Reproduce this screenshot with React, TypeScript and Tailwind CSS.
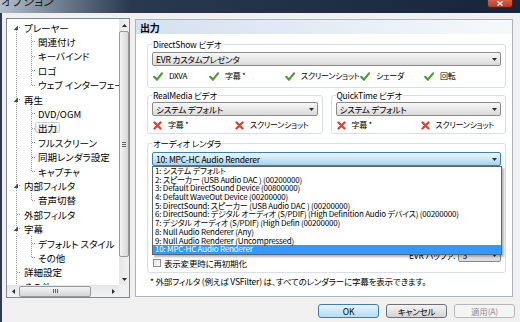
import React from "react";

type TreeNode = {
  label: string;
  level: 0 | 1;
  expand?: boolean;
  first?: boolean;
  last?: boolean;
  lastChild?: boolean;
  selected?: boolean;
};

const TREE: TreeNode[] = [
  { label: "プレーヤー", level: 0, expand: true, first: true },
  { label: "関連付け", level: 1 },
  { label: "キーバインド", level: 1 },
  { label: "ロゴ", level: 1 },
  { label: "ウェブ インターフェース", level: 1, lastChild: true },
  { label: "再生", level: 0, expand: true },
  { label: "DVD/OGM", level: 1 },
  { label: "出力", level: 1, selected: true },
  { label: "フルスクリーン", level: 1 },
  { label: "同期レンダラ設定", level: 1 },
  { label: "キャプチャ", level: 1, lastChild: true },
  { label: "内部フィルタ", level: 0, expand: true },
  { label: "音声切替", level: 1, lastChild: true },
  { label: "外部フィルタ", level: 0 },
  { label: "字幕", level: 0, expand: true },
  { label: "デフォルト スタイル", level: 1 },
  { label: "その他", level: 1, lastChild: true },
  { label: "詳細設定", level: 0 },
  { label: "その他", level: 0, last: true },
];

const AUDIO_ITEMS = [
  "1: システム デフォルト",
  "2: スピーカー (USB Audio DAC   ) (00200000)",
  "3: Default DirectSound Device (00800000)",
  "4: Default WaveOut Device (00200000)",
  "5: DirectSound: スピーカー (USB Audio DAC   ) (00200000)",
  "6: DirectSound: デジタル オーディオ (S/PDIF) (High Definition Audio デバイス) (00200000)",
  "7: デジタル オーディオ (S/PDIF) (High Defin (00200000)",
  "8: Null Audio Renderer (Any)",
  "9: Null Audio Renderer (Uncompressed)",
  "10: MPC-HC Audio Renderer",
];

const DOT = { stroke: "#9a9a9a", strokeDasharray: "1 1", shapeRendering: "crispEdges" as const };

function TreeRow({ n }: { n: TreeNode }) {
  const mid = 7.5;
  return (
    <div className="flex items-center h-[14.4px] shrink-0 whitespace-nowrap">
      {n.level === 0 ? (
        <svg width="14" height="14.4" className="shrink-0">
          <line x1="9.5" x2="9.5" y1={n.first ? mid : 0} y2={n.last ? mid : 14.4} {...DOT} />
          <line x1="9.5" x2="14" y1={mid} y2={mid} {...DOT} />
          {n.expand && <polygon points="11,5.5 11,10 6.5,10" fill="#4a4a4a" />}
        </svg>
      ) : (
        <svg width="28" height="14.4" className="shrink-0">
          <line x1="9.5" x2="9.5" y1="0" y2="14.4" {...DOT} />
          <line x1="24.5" x2="24.5" y1="0" y2={n.lastChild ? mid : 14.4} {...DOT} />
          <line x1="24.5" x2="28" y1={mid} y2={mid} {...DOT} />
        </svg>
      )}
      <span
        className={
          n.selected
            ? "px-[2px] h-[11px] leading-[11px] border border-[#d0d0d0] rounded-[2px] bg-gradient-to-b from-[#fafafa] to-[#e6e6e6]"
            : "px-[2px] h-[11px] leading-[11px] border border-transparent"
        }
      >
        {n.label}
      </span>
    </div>
  );
}

function Arrow({ dir }: { dir: "up" | "down" | "left" | "right" }) {
  const pts = {
    up: "0,3 2.5,0 5,3",
    down: "0,0 5,0 2.5,3",
    left: "3,0 3,5 0,2.5",
    right: "0,0 0,5 3,2.5",
  }[dir];
  const horiz = dir === "up" || dir === "down";
  return (
    <svg width={horiz ? 5 : 3} height={horiz ? 3 : 5} className="shrink-0">
      <polygon points={pts} fill="#2b2b2b" />
    </svg>
  );
}

function Tree() {
  return (
    <div className="w-[124px] h-[280px] border border-[#828790] bg-white flex flex-col shrink-0">
      <div className="flex h-[266px]">
        <div className="flex-1 overflow-hidden pt-[1px] text-[9.5px]">
          {TREE.map((n, i) => (
            <TreeRow key={i} n={n} />
          ))}
        </div>
        <div className="w-[10px] flex flex-col bg-gradient-to-r from-[#e6e6e6] to-[#f2f2f2]">
          <div className="h-[12px] flex items-center justify-center">
            <Arrow dir="up" />
          </div>
          <div className="h-[226px] rounded-[2px] border border-[#999] bg-gradient-to-r from-[#f4f4f4] to-[#d6d6d6] flex items-center justify-center">
            <div className="flex flex-col gap-[1px]">
              <div className="w-[4px] h-[1px] bg-[#666]" />
              <div className="w-[4px] h-[1px] bg-[#666]" />
              <div className="w-[4px] h-[1px] bg-[#666]" />
            </div>
          </div>
          <div className="flex-1" />
          <div className="h-[12px] flex items-center justify-center">
            <Arrow dir="down" />
          </div>
        </div>
      </div>
      <div className="flex h-[12px]">
        <div className="flex-1 flex items-center bg-gradient-to-b from-[#e6e6e6] to-[#f2f2f2]">
          <div className="w-[12px] flex justify-center">
            <Arrow dir="left" />
          </div>
          <div className="w-[72px] h-[11px] rounded-[2px] border border-[#999] bg-gradient-to-b from-[#f4f4f4] to-[#d6d6d6] flex items-center justify-center gap-[1px]">
            <div className="w-[1px] h-[4px] bg-[#666]" />
            <div className="w-[1px] h-[4px] bg-[#666]" />
            <div className="w-[1px] h-[4px] bg-[#666]" />
          </div>
          <div className="flex-1" />
          <div className="w-[12px] flex justify-center">
            <Arrow dir="right" />
          </div>
        </div>
        <div className="w-[10px] bg-[#f0f0f0]" />
      </div>
    </div>
  );
}

function Combo({ text, active }: { text: string; active?: boolean }) {
  return (
    <div
      className={
        active
          ? "h-[14px] flex items-center justify-between px-[3px] rounded-[2px] border border-[#3c7fb1] bg-gradient-to-b from-[#eef7fd] to-[#a3d4f2]"
          : "h-[14px] flex items-center justify-between px-[3px] rounded-[2px] border border-[#8a8a8a] bg-gradient-to-b from-[#f7f7f7] to-[#dadada]"
      }
    >
      <span className="leading-none whitespace-nowrap">{text}</span>
      <Arrow dir="down" />
    </div>
  );
}

function Check() {
  return (
    <svg width="10" height="9" className="shrink-0">
      <polyline points="1.2,4.8 4,7.6 9,1.4" fill="none" stroke="#4f9a35" strokeWidth="2.2" strokeLinecap="round" strokeLinejoin="round" />
    </svg>
  );
}

function Cross() {
  return (
    <svg width="9" height="9" className="shrink-0">
      <path d="M1.5 1.5 L7.5 7.5 M7.5 1.5 L1.5 7.5" stroke="#dd3f33" strokeWidth="2.3" strokeLinecap="round" />
    </svg>
  );
}

function Flag({ ok, label, w }: { ok: boolean; label: string; w: string }) {
  return (
    <div className={`flex items-center gap-[6px] shrink-0 whitespace-nowrap ${w}`}>
      {ok ? <Check /> : <Cross />}
      <span className="leading-none text-[8px] tracking-[-0.3px]">{label}</span>
    </div>
  );
}

function Group({ title, className, children }: { title: string; className?: string; children: React.ReactNode }) {
  return (
    <fieldset className={`border border-[#d5dfe5] rounded-[3px] px-[4px] ${className ?? ""}`}>
      <legend className="px-[1px] leading-[11px]">{title}</legend>
      {children}
    </fieldset>
  );
}

function Button({ label, kind }: { label: string; kind: "default" | "normal" | "disabled" }) {
  const cls = {
    default: "border-[#3c7fb1] bg-gradient-to-b from-[#e9f5fc] to-[#b4dcf3] text-black",
    normal: "border-[#707070] bg-gradient-to-b from-[#f4f4f4] to-[#d4d4d4] text-black",
    disabled: "border-[#b5b8bb] bg-[#f4f4f4] text-[#8f8f8f]",
  }[kind];
  return (
    <div className={`w-[61px] h-[14px] rounded-[3px] border flex items-center justify-center leading-none ${cls}`}>
      {label}
    </div>
  );
}

export default function App() {
  return (
    <div className="w-[520px] h-[322px] overflow-hidden flex flex-col bg-[#f0f0f0] text-black text-[8.5px] tracking-[-0.2px] font-['Noto_Sans_CJK_JP','Noto_Sans_CJK_SC',sans-serif] [font-feature-settings:'palt']">
      {/* title bar */}
      <div className="h-[13px] shrink-0 flex items-start justify-between overflow-hidden bg-gradient-to-r from-[#b3bfcb] via-[#2a3a4e] via-25% to-[#16253a]">
        <span className="text-[12px] leading-[12px] -mt-[5px] text-[#1a1a1a] pl-[1px] tracking-normal">オプション</span>
        <div className="mr-[7px] w-[26px] h-[8px] rounded-b-[3px] border border-t-0 border-[#5a1d14] bg-gradient-to-b from-[#d9604a] to-[#b73a26] flex items-center justify-center">
          <svg width="6" height="5">
            <path d="M0.5 0.5 L5.5 4.5 M5.5 0.5 L0.5 4.5" stroke="#fff" strokeWidth="1.3" />
          </svg>
        </div>
      </div>

      <div className="flex-1 flex flex-col border-l-2 border-[#2c3b4d]">
        <div className="flex gap-[5px] pl-[4px] pt-[5px]">
          <div className="tracking-normal">
            <Tree />
          </div>

          {/* settings page */}
          <div className="mt-[1px] w-[378px] h-[278px] border border-[#aab3bd] bg-white flex flex-col">
            <div className="h-[14px] flex items-center pl-[4px] font-bold text-[10px] bg-gradient-to-r from-[#d5e1ef] via-[#e4ecf5] to-[#f6f9fc]">
              出力
            </div>

            <div className="flex flex-col pl-[11px] pr-[6px]">
              <Group title="DirectShow ビデオ" className="mt-[5px] pb-[5px]">
                <div className="mt-[2px]">
                  <Combo text="EVR カスタムプレゼンタ" />
                </div>
                <div className="mt-[4px] h-[12px] flex items-center pl-[1px]">
                  <Flag ok label="DXVA" w="w-[56px]" />
                  <Flag ok label="字幕 *" w="w-[76px]" />
                  <Flag ok label="スクリーンショット" w="w-[75px]" />
                  <Flag ok label="シェーダ" w="w-[64px]" />
                  <Flag ok label="回転" w="w-[50px]" />
                </div>
              </Group>

              <div className="mt-[2px] flex gap-[8px]">
                <Group title="RealMedia ビデオ" className="flex-1 pb-[2px]">
                  <div className="mt-[1px]">
                    <Combo text="システム デフォルト" />
                  </div>
                  <div className="mt-[3px] h-[12px] flex items-center pl-[1px]">
                    <Flag ok={false} label="字幕 *" w="w-[82px]" />
                    <Flag ok={false} label="スクリーンショット" w="w-[80px]" />
                  </div>
                </Group>
                <Group title="QuickTime ビデオ" className="flex-1 pb-[2px]">
                  <div className="mt-[1px]">
                    <Combo text="システム デフォルト" />
                  </div>
                  <div className="mt-[3px] h-[12px] flex items-center pl-[1px]">
                    <Flag ok={false} label="字幕 *" w="w-[84px]" />
                    <Flag ok={false} label="スクリーンショット" w="w-[80px]" />
                  </div>
                </Group>
              </div>

              <Group title="オーディオ レンダラ" className="mt-[4px] pb-[5px]">
                <div className="mt-[3px] relative">
                  <Combo text="10: MPC-HC Audio Renderer" active />
                  {/* opened drop-down list */}
                  <div className="absolute left-0 right-[-1px] top-[14px] z-10 bg-white border border-[#646464] shadow-[2px_2px_2px_rgba(0,0,0,0.3)] text-[8px]">
                    {AUDIO_ITEMS.map((t, i) => (
                      <div
                        key={i}
                        className={
                          i === AUDIO_ITEMS.length - 1
                            ? "h-[8.7px] leading-[8.7px] pl-[2px] whitespace-nowrap bg-[#3399ff] text-white"
                            : "h-[8.7px] leading-[8.7px] pl-[2px] whitespace-nowrap"
                        }
                      >
                        {t}
                      </div>
                    ))}
                  </div>
                </div>
                <div className="h-[83px]" />
                <div className="h-[18px] flex justify-between">
                  <div className="self-end flex items-center gap-[3px] pl-[1px]">
                    <div className="w-[8px] h-[8px] border border-[#8e8f8f] bg-gradient-to-br from-[#e3e3e3] to-[#fafafa]" />
                    <span className="leading-none">表示変更時に再初期化</span>
                  </div>
                  <div className="self-start w-[92px] shrink-0 flex items-center gap-[3px]">
                    <span className="flex-1 text-right leading-none whitespace-nowrap">EVR バッファ:</span>
                    <div className="w-[43px] shrink-0 h-[13px] flex items-center justify-between px-[3px] rounded-[2px] border border-[#8a8a8a] bg-gradient-to-b from-[#f7f7f7] to-[#dadada]">
                      <span className="leading-none">3</span>
                      <Arrow dir="down" />
                    </div>
                  </div>
                </div>
              </Group>

              <div className="mt-[3px] ml-[3px] leading-[11px] whitespace-nowrap">
                * 外部フィルタ (例えば VSFilter) は、すべてのレンダラーに字幕を表示できます。
              </div>
            </div>
          </div>
        </div>

        <div className="mt-[6px] flex justify-end gap-[7px] pr-[5px]">
          <Button label="OK" kind="default" />
          <Button label="キャンセル" kind="normal" />
          <Button label="適用(A)" kind="disabled" />
        </div>
      </div>
    </div>
  );
}
